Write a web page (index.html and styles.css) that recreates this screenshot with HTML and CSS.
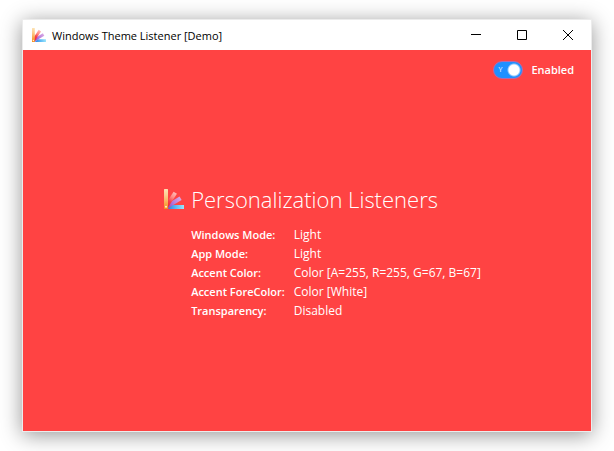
FILE: index.html
```html
<!DOCTYPE html>
<html lang="en">
<head>
<meta charset="utf-8">
<title>Windows Theme Listener [Demo]</title>
<link rel="stylesheet" href="styles.css">
</head>
<body>
<svg class="defs" aria-hidden="true">
  <defs>
    <linearGradient id="orange" x1="0" y1="0" x2="0" y2="1"><stop offset="0" stop-color="#fde3b4"/><stop offset=".3" stop-color="#fccf92"/><stop offset=".6" stop-color="#fbb35e"/><stop offset="1" stop-color="#f58a1c"/></linearGradient>
    <linearGradient id="red" x1="0" y1="0" x2="0" y2="1"><stop offset="0" stop-color="#ffb9b4"/><stop offset=".3" stop-color="#ff8d88"/><stop offset=".6" stop-color="#f8404a"/><stop offset="1" stop-color="#e8202c"/></linearGradient>
    <linearGradient id="purple" x1="0" y1="0" x2="0" y2="1"><stop offset="0" stop-color="#d9a8e4"/><stop offset=".5" stop-color="#b478dc"/><stop offset="1" stop-color="#8a3fc0"/></linearGradient>
    <linearGradient id="blue" x1="0" y1="0" x2="1" y2="0"><stop offset="0" stop-color="#2f7fe0"/><stop offset=".5" stop-color="#5cb8f5"/><stop offset="1" stop-color="#9be6fb"/></linearGradient>
    <symbol id="swatches" viewBox="0 0 20 20">
      <path d="M4 20L8 16H20V20Z" fill="url(#blue)"/>
      <rect x="0" y="1" width="4" height="17" fill="url(#purple)" transform="rotate(59 2 18)"/>
      <rect x="0" y="1" width="4" height="17" fill="url(#red)" transform="rotate(33 2 18)"/>
      <rect x="0" y="0" width="4" height="20" rx=".5" fill="url(#orange)"/>
      <circle cx="2" cy="17.800" r="1" fill="#fff2c8"/>
    </symbol>
  </defs>
</svg>
<div class="window">
  <header class="titlebar">
    <svg class="app-icon" aria-hidden="true"><use href="#swatches"/></svg>
    <span class="title">Windows Theme Listener [Demo]</span>
    <button class="caption" type="button" aria-label="Minimize"><svg viewBox="0 0 10 10"><path d="M0 4.500H10"/></svg></button>
    <button class="caption" type="button" aria-label="Maximize"><svg viewBox="0 0 10 10"><path d="M.5.500H9.500V9.500H.5Z"/></svg></button>
    <button class="caption" type="button" aria-label="Close"><svg viewBox="0 0 10 10"><path d="M0 0L10 10M10 0L0 10"/></svg></button>
  </header>
  <main class="content">
    <label class="toggle">
      <span class="switch"><input type="checkbox" checked><span class="mark" aria-hidden="true">Y</span></span>
      Enabled
    </label>
    <section class="panel">
      <svg class="panel-icon" aria-hidden="true"><use href="#swatches"/></svg>
      <h1>Personalization Listeners</h1>
      <dl>
        <dt>Windows Mode:</dt><dd>Light</dd>
        <dt>App Mode:</dt><dd>Light</dd>
        <dt>Accent Color:</dt><dd>Color [A=255, R=255, G=67, B=67]</dd>
        <dt>Accent ForeColor:</dt><dd>Color [White]</dd>
        <dt>Transparency:</dt><dd>Disabled</dd>
      </dl>
    </section>
  </main>
</div>
</body>
</html>
```
FILE: styles.css
```css
* { box-sizing: border-box; }

body {
  display: flex;
  min-height: 100vh;
  margin: 0;
  padding: 19px 22px;
  background: #fff;
  color: #000;
  font: 11px/19px "Open Sans", "Noto Sans", sans-serif;
}

.defs {
  position: absolute;
  width: 0;
  height: 0;
}

.window {
  display: flex;
  flex: 1;
  flex-direction: column;
  border: 1px solid #ececec;
  box-shadow: 0 3px 20px rgba(0, 0, 0, .42);
}

.titlebar {
  display: flex;
  align-items: center;
  height: 30px;
  padding-left: 9px;
  background: #fff;
}

.app-icon {
  width: 14px;
  height: 14px;
  margin-right: 6px;
}

.title {
  flex: 1;
  white-space: nowrap;
}

.caption {
  display: grid;
  place-items: center;
  width: 46px;
  height: 30px;
  padding: 0;
  border: 0;
  background: none;
}

.caption svg {
  width: 10px;
  height: 10px;
  overflow: visible;
  fill: none;
  stroke: #000;
}

.content {
  display: flex;
  flex: 1;
  flex-direction: column;
  padding: 10px 17px 10px 16px;
  background: #ff4343;
  color: #fff;
}

.toggle {
  display: flex;
  align-items: center;
  align-self: flex-end;
  gap: 8px;
  font-weight: 600;
}

.switch {
  position: relative;
  display: flex;
}

.switch input {
  width: 30px;
  height: 18px;
  margin: 0;
  border: 1px solid #b06bb0;
  border-radius: 9px;
  background: radial-gradient(circle at 20px 8px, #fff 5px, #1e90ff 7px);
  appearance: none;
}

.mark {
  position: absolute;
  top: 0;
  left: 5px;
  font-size: 7px;
  font-weight: 400;
  line-height: 18px;
}

.panel {
  display: grid;
  grid-template-columns: 20px auto;
  column-gap: 7px;
  align-items: center;
  align-self: center;
  margin: 103px 0 0 32px;
}

.panel-icon {
  width: 20px;
  height: 20px;
}

h1 {
  margin: 0;
  font-size: 22px;
  font-weight: 300;
  line-height: 34px;
}

dl {
  display: grid;
  grid-column: 2;
  grid-template-columns: auto auto;
  column-gap: 9px;
  justify-content: start;
  margin: 9px 0 0;
}

dt { font-weight: 600; }

dd {
  margin: 0;
  font-size: 12px;
}
```
